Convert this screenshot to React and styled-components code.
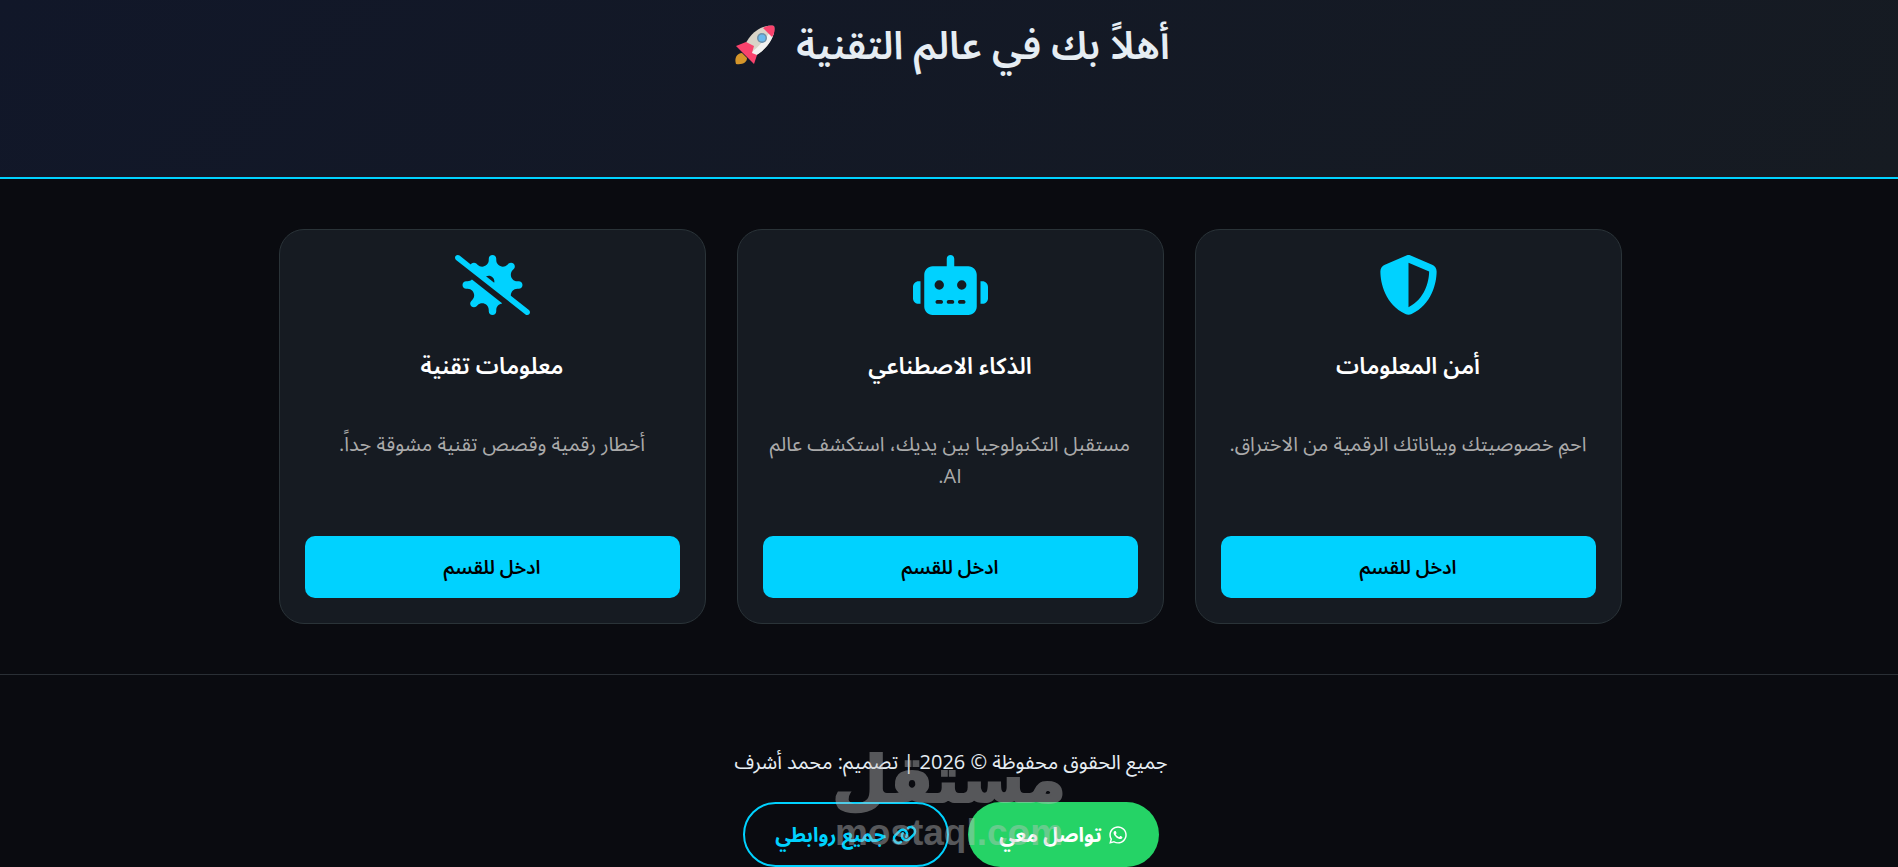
import React from "react";
import styled, { createGlobalStyle } from "styled-components";
import {
  FaShieldHalved,
  FaRobot,
  FaVirusSlash,
  FaWhatsapp,
  FaLink,
} from "react-icons/fa6";

export default function App() {
  const sections = [
    {
      id: 1,
      title: "أمن المعلومات",
      text: "احمِ خصوصيتك وبياناتك الرقمية من الاختراق.",
      icon: <FaShieldHalved />,
    },
    {
      id: 2,
      title: "الذكاء الاصطناعي",
      text: "مستقبل التكنولوجيا بين يديك، استكشف عالم AI.",
      icon: <FaRobot />,
    },
    {
      id: 3,
      title: "معلومات تقنية",
      text: "أخطار رقمية وقصص تقنية مشوقة جداً.",
      icon: <FaVirusSlash />,
    },
  ];

  return (
    <>
      <GlobalStyle />
      <Page dir="rtl" lang="ar">
        <Header>
          <Title>
            أهلاً بك في عالم التقنية
            <Rocket />
          </Title>
        </Header>
        <Main>
          {sections.map((section) => (
            <Card key={section.id}>
              <IconBox>{section.icon}</IconBox>
              <CardTitle>{section.title}</CardTitle>
              <CardText>{section.text}</CardText>
              <CardButton type="button">ادخل للقسم</CardButton>
            </Card>
          ))}
        </Main>
        <Footer>
          <Copyright>جميع الحقوق محفوظة © 2026 | تصميم: محمد أشرف</Copyright>
          <Links>
            <Pill href="#contact" $filled>
              <FaWhatsapp /> تواصل معي
            </Pill>
            <Pill href="#links" $wideIcon>
              <FaLink /> جميع روابطي
            </Pill>
          </Links>
          <Watermark>
            <MarkName>مستقل</MarkName>
            <MarkDomain dir="ltr">mostaql.com</MarkDomain>
          </Watermark>
        </Footer>
      </Page>
    </>
  );
}

function Rocket() {
  return (
    <svg width="42" height="42" viewBox="0 -2 40 42" role="img" aria-label="🚀">
      <path d="M1 39C-1 33 2 28 7 28l5 5c0 4-4 7-11 6z" fill="#d4952a" />
      <path d="M10 28l9-7 3 8-5 6z" fill="#3b6a8f" />
      <path d="M39 1C26-1 13 9 8 25l10 7C31 25 40 14 39 1z" fill="#d9d4c8" />
      <path d="M39 1C41 13 31 25 18 32l-4-3C24 22 32 12 39 1z" fill="#f2f2f0" />
      <path d="M39 1c-4-1-8 0-11 2l9 9c3-4 3-8 2-11z" fill="#f9436d" />
      <path d="M1 21l10-4 8 4-2 7 5 2-3 9z" fill="#f9436d" />
      <circle cx="27" cy="13" r="5" fill="#6b8fa8" />
      <circle cx="27" cy="13" r="3.5" fill="#69b9ec" />
    </svg>
  );
}

const GlobalStyle = createGlobalStyle`
  * {
    box-sizing: border-box;
  }
  html {
    scrollbar-width: none;
  }
  body {
    margin: 0;
    background: #0a0b10;
  }
`;
const Page = styled.div`
  color: #e6edf3;
  font-family: "Open Sans", "Noto Sans", "Noto Sans Arabic", sans-serif;
  font-size: 20px;
  line-height: 32px;
`;
const Header = styled.header`
  display: flex;
  justify-content: center;
  padding: 11px 0 101px 6px;
  background: linear-gradient(135deg, #111729, #161b22);
  border-bottom: 2px solid #00d2ff;
`;
const Title = styled.h1`
  display: flex;
  align-items: center;
  gap: 20px;
  margin: 0;
  font-size: 39px;
  font-weight: 600;
  line-height: 65px;
`;
const Main = styled.main`
  display: grid;
  grid-template-columns: repeat(3, 1fr);
  gap: 31px;
  max-width: 1345px;
  margin: 0 auto;
  padding: 50px 0 50px 2px;
`;
const Card = styled.section`
  display: flex;
  flex-direction: column;
  align-items: center;
  padding: 25px;
  background: #161b22;
  border: 1px solid #2a3338;
  border-radius: 25px;
  text-align: center;
`;
const IconBox = styled.div`
  display: flex;
  color: #00d2ff;

  svg {
    width: 75px;
    height: 60px;
  }
`;
const CardTitle = styled.h3`
  margin: 32px 0 30px;
  color: #fff;
  font-size: 23px;
  font-weight: 600;
  line-height: 36px;
`;
const CardText = styled.p`
  flex: 1;
  min-height: 123px;
  margin: 0;
  padding-top: 15px;
  color: #aaa;
`;
const CardButton = styled.button`
  width: 100%;
  height: 62px;
  padding: 2px 0 0;
  border: 0;
  border-radius: 10px;
  background: #00d2ff;
  color: #000;
  font-family: inherit;
  font-size: 19px;
  font-weight: 600;
  cursor: pointer;
`;
const Footer = styled.footer`
  position: relative;
  display: flex;
  flex-direction: column;
  align-items: center;
  gap: 24px;
  padding: 71px 0 60px 4px;
  border-top: 1px solid #2a2f35;
`;
const Copyright = styled.p`
  margin: 0;
`;
const Links = styled.div`
  display: flex;
  gap: 19px;
`;
const Pill = styled.a`
  display: flex;
  align-items: center;
  gap: 6px;
  height: 65px;
  padding: 0 ${(props) => (props.$filled ? "31px" : "30px")};
  border: ${(props) => (props.$filled ? "0" : "2px solid #00d2ff")};
  border-radius: 50px;
  background: ${(props) => (props.$filled ? "#25d366" : "transparent")};
  color: ${(props) => (props.$filled ? "#fff" : "#00d2ff")};
  font-weight: 700;
  text-decoration: none;

  svg {
    width: ${(props) => (props.$wideIcon ? "25px" : "20px")};
    height: 20px;
  }
`;
// sits over the footer text and links
const Watermark = styled.div`
  position: absolute;
  top: 72px;
  left: 0;
  right: 0;
  display: flex;
  flex-direction: column;
  align-items: center;
  color: #c3c3c3;
  font-family: "Liberation Sans", sans-serif;
  font-weight: 700;
  opacity: 0.41;
  pointer-events: none;
`;
const MarkName = styled.span`
  font-family: "DejaVu Sans", sans-serif;
  font-size: 64px;
  line-height: 66px;
  -webkit-text-stroke: 2px #c3c3c3;
`;
const MarkDomain = styled.span`
  font-size: 37px;
  line-height: 40px;
`;
